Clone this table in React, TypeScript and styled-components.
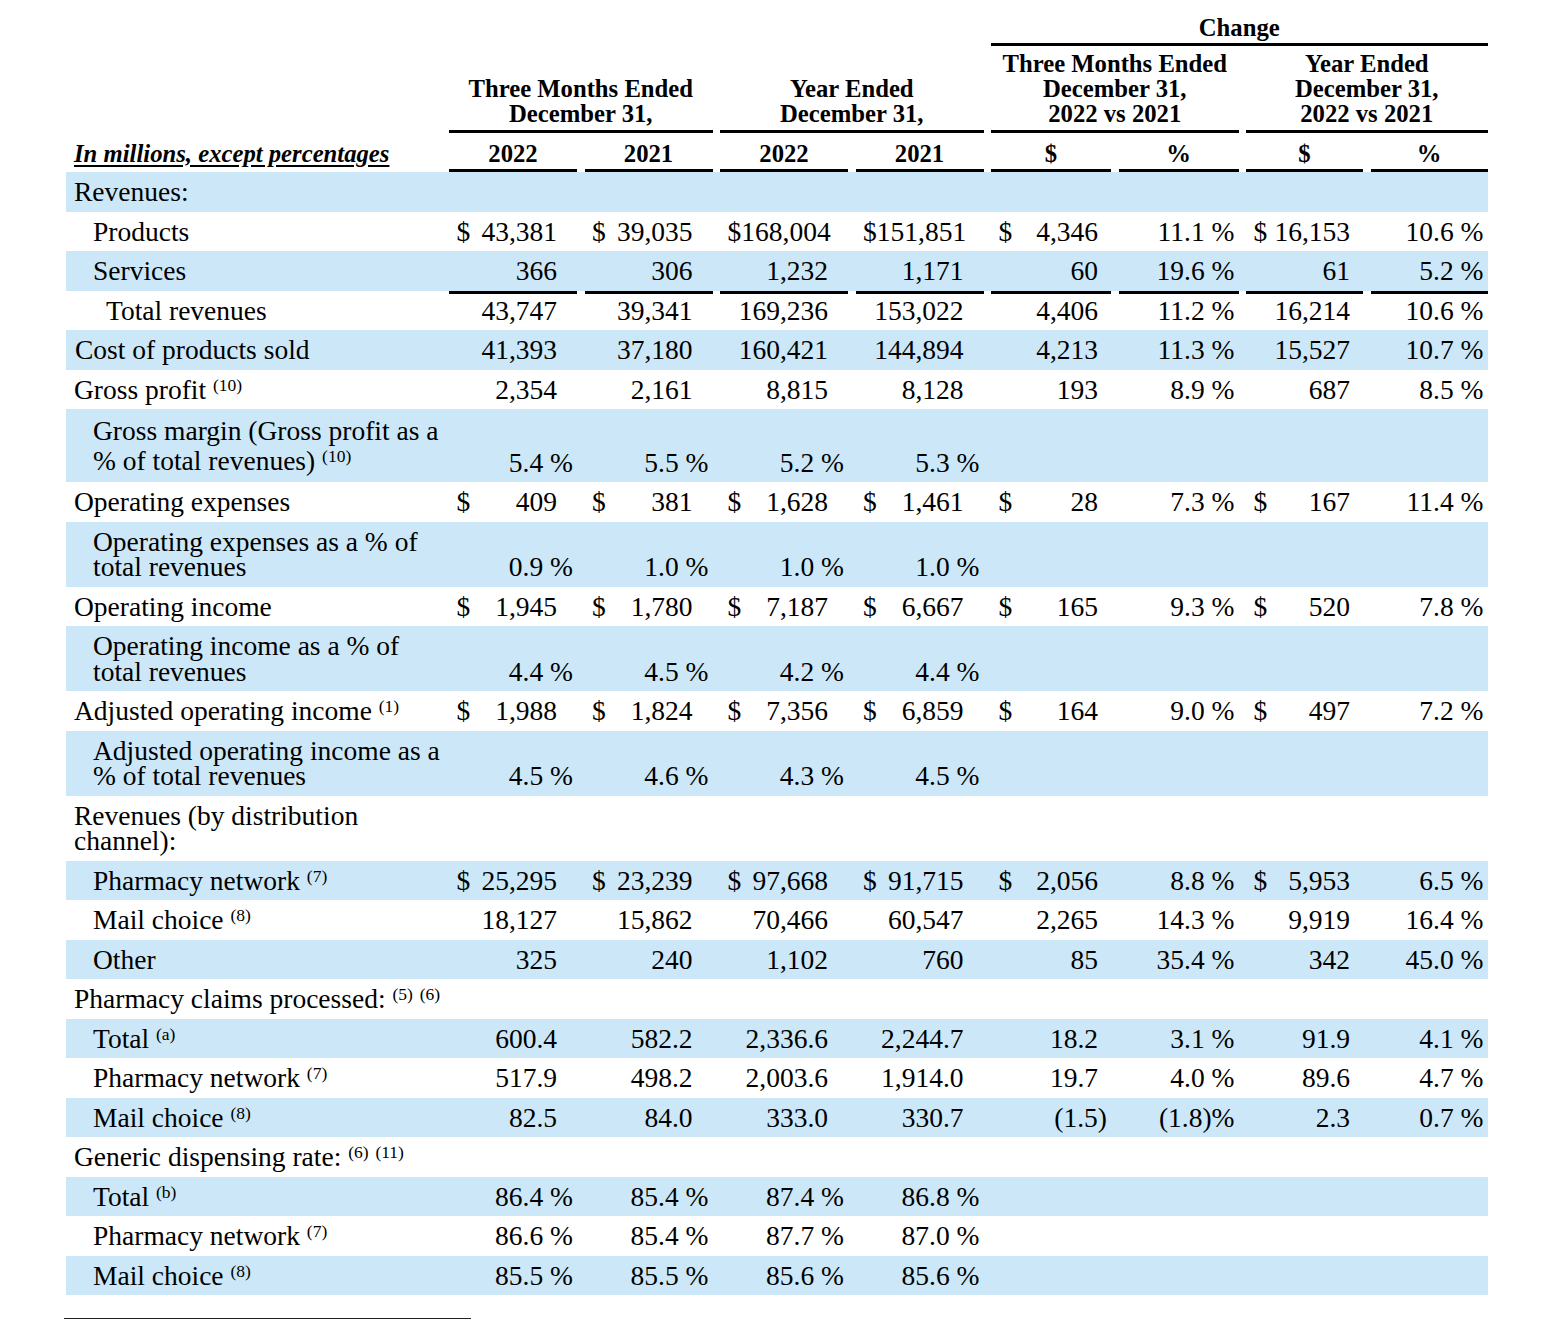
import { FC, ReactNode } from 'react';
import styled, { createGlobalStyle } from 'styled-components';

const GlobalStyle = createGlobalStyle`
  body {
    margin: 0;
    background: #fff;
    color: #000;
    font-family: 'Liberation Serif', 'Times New Roman', serif;
  }
`;

const COLUMNS = '375.5px repeat(4, 128px) 120px 120px 117px 117px';
const SHADE = '#cce8f8';

const Page = styled.div`
  padding: 0 0 40px 66px;
  width: 1422px;
`;

const Header = styled.div`
  display: grid;
  grid-template-columns: ${COLUMNS};
  column-gap: 7.5px;
  font-size: 24.7px;
  font-weight: bold;
  line-height: 25px;
`;

const GroupHead = styled.div<{ $col: string; $row: string; $pad?: string }>`
  grid-column: ${(p) => p.$col};
  grid-row: ${(p) => p.$row};
  align-self: end;
  text-align: center;
  padding: ${(p) => p.$pad || '0 0 4.5px'};
  border-bottom: 3px solid #000;
`;

const ColHead = styled.div`
  grid-row: 3;
  text-align: center;
  padding: 7.5px 0 3.5px;
  border-bottom: 3px solid #000;
`;

const UnitsHead = styled.div`
  grid-row: 3;
  grid-column: 1;
  padding: 7.5px 0 3.5px 8px;
  font-style: italic;
  text-decoration: underline;
  text-underline-offset: 3px;
  white-space: nowrap;
`;

const Row = styled.div<{ $shade?: boolean }>`
  display: grid;
  grid-template-columns: ${COLUMNS};
  column-gap: 7.5px;
  background: ${(p) => (p.$shade ? SHADE : 'transparent')};
  font-size: 27.5px;
  line-height: 25.5px;
`;

const Label = styled.div<{ $indent: number; $tall?: boolean }>`
  padding: 7px 0 7px ${(p) => p.$indent}px;
  white-space: nowrap;
  line-height: ${(p) => (p.$tall ? '29.5px' : '25.5px')};
`;

const Cell = styled.div<{ $rule?: boolean }>`
  display: flex;
  align-items: flex-end;
  padding: ${(p) => (p.$rule ? '4px' : '7px')} 0 7px 7.5px;
  border-top: ${(p) => (p.$rule ? '3px solid #000' : 'none')};
  white-space: nowrap;
`;

const Value = styled.span<{ $pad: number }>`
  margin-left: auto;
  padding-right: ${(p) => p.$pad}px;
`;

const Sup = styled.sup`
  font-size: 17.5px;
  line-height: 0;
  vertical-align: 8px;
`;

const FootRule = styled.div`
  width: 407px;
  margin: 23px 0 0 -2px;
  border-top: 1px solid #222;
`;

// number padding for cols 1-4 and the two $ change columns
const NUM_PAD = [20, 20, 20, 20, 13, 4, 13, 4];

type Line = {
  label: ReactNode;
  indent: number;
  shade?: boolean;
  rule?: boolean;
  tall?: boolean;
  values?: string[];
};

const s = (n: string) => <Sup>{n}</Sup>;

const lines: Line[] = [
  { label: 'Revenues:', indent: 8, shade: true },
  { label: 'Products', indent: 27, values: ['$43,381', '$39,035', '$168,004', '$151,851', '$4,346', '11.1 %', '$16,153', '10.6 %'] },
  { label: 'Services', indent: 27, shade: true, values: ['366', '306', '1,232', '1,171', '60', '19.6 %', '61', '5.2 %'] },
  { label: 'Total revenues', indent: 40, rule: true, values: ['43,747', '39,341', '169,236', '153,022', '4,406', '11.2 %', '16,214', '10.6 %'] },
  { label: 'Cost of products sold', indent: 9, shade: true, values: ['41,393', '37,180', '160,421', '144,894', '4,213', '11.3 %', '15,527', '10.7 %'] },
  { label: <>Gross profit {s('(10)')}</>, indent: 8, values: ['2,354', '2,161', '8,815', '8,128', '193', '8.9 %', '687', '8.5 %'] },
  {
    label: <>Gross margin (Gross profit as a<br />% of total revenues) {s('(10)')}</>,
    indent: 27, shade: true, tall: true, values: ['5.4 %', '5.5 %', '5.2 %', '5.3 %'],
  },
  { label: 'Operating expenses', indent: 8, values: ['$409', '$381', '$1,628', '$1,461', '$28', '7.3 %', '$167', '11.4 %'] },
  { label: <>Operating expenses as a % of<br />total revenues</>, indent: 27, shade: true, values: ['0.9 %', '1.0 %', '1.0 %', '1.0 %'] },
  { label: 'Operating income', indent: 8, values: ['$1,945', '$1,780', '$7,187', '$6,667', '$165', '9.3 %', '$520', '7.8 %'] },
  { label: <>Operating income as a % of<br />total revenues</>, indent: 27, shade: true, values: ['4.4 %', '4.5 %', '4.2 %', '4.4 %'] },
  { label: <>Adjusted operating income {s('(1)')}</>, indent: 8, values: ['$1,988', '$1,824', '$7,356', '$6,859', '$164', '9.0 %', '$497', '7.2 %'] },
  { label: <>Adjusted operating income as a<br />% of total revenues</>, indent: 27, shade: true, values: ['4.5 %', '4.6 %', '4.3 %', '4.5 %'] },
  { label: <>Revenues (by distribution<br />channel):</>, indent: 8 },
  { label: <>Pharmacy network {s('(7)')}</>, indent: 27, shade: true, values: ['$25,295', '$23,239', '$97,668', '$91,715', '$2,056', '8.8 %', '$5,953', '6.5 %'] },
  { label: <>Mail choice {s('(8)')}</>, indent: 27, values: ['18,127', '15,862', '70,466', '60,547', '2,265', '14.3 %', '9,919', '16.4 %'] },
  { label: 'Other', indent: 27, shade: true, values: ['325', '240', '1,102', '760', '85', '35.4 %', '342', '45.0 %'] },
  { label: <>Pharmacy claims processed: {s('(5)')} {s('(6)')}</>, indent: 8 },
  { label: <>Total {s('(a)')}</>, indent: 27, shade: true, values: ['600.4', '582.2', '2,336.6', '2,244.7', '18.2', '3.1 %', '91.9', '4.1 %'] },
  { label: <>Pharmacy network {s('(7)')}</>, indent: 27, values: ['517.9', '498.2', '2,003.6', '1,914.0', '19.7', '4.0 %', '89.6', '4.7 %'] },
  { label: <>Mail choice {s('(8)')}</>, indent: 27, shade: true, values: ['82.5', '84.0', '333.0', '330.7', '(1.5)', '(1.8)%', '2.3', '0.7 %'] },
  { label: <>Generic dispensing rate: {s('(6)')} {s('(11)')}</>, indent: 8 },
  { label: <>Total {s('(b)')}</>, indent: 27, shade: true, values: ['86.4 %', '85.4 %', '87.4 %', '86.8 %'] },
  { label: <>Pharmacy network {s('(7)')}</>, indent: 27, values: ['86.6 %', '85.4 %', '87.7 %', '87.0 %'] },
  { label: <>Mail choice {s('(8)')}</>, indent: 27, shade: true, values: ['85.5 %', '85.5 %', '85.6 %', '85.6 %'] },
];

const DataCell: FC<{ raw?: string; col: number; rule?: boolean }> = ({ raw, col, rule }) => {
  if (!raw) return <Cell $rule={rule} />;
  const dollar = raw.startsWith('$');
  const text = dollar ? raw.slice(1) : raw;
  let pad = NUM_PAD[col];
  if (text.endsWith('%')) pad = 4;
  else if (text.endsWith(')')) pad -= 9;
  return (
    <Cell $rule={rule}>
      {dollar && <span>$</span>}
      <Value $pad={pad}>{text}</Value>
    </Cell>
  );
};

const TableHeader: FC = () => (
  <Header>
    <GroupHead $col="6 / 10" $row="1" $pad="14.5px 0 3.5px">Change</GroupHead>
    <GroupHead $col="2 / 4" $row="1 / 3">Three Months Ended<br />December 31,</GroupHead>
    <GroupHead $col="4 / 6" $row="1 / 3">Year Ended<br />December 31,</GroupHead>
    <GroupHead $col="6 / 8" $row="2" $pad="4.5px 0 4.5px">Three Months Ended<br />December 31,<br />2022 vs 2021</GroupHead>
    <GroupHead $col="8 / 10" $row="2" $pad="4.5px 0 4.5px">Year Ended<br />December 31,<br />2022 vs 2021</GroupHead>
    <UnitsHead>In millions, except percentages</UnitsHead>
    {['2022', '2021', '2022', '2021', '$', '%', '$', '%'].map((h, i) => (
      <ColHead key={i}>{h}</ColHead>
    ))}
  </Header>
);

const App: FC = () => (
  <>
    <GlobalStyle />
    <Page>
      <TableHeader />
      {lines.map((line, i) => (
        <Row key={i} $shade={line.shade}>
          <Label $indent={line.indent} $tall={line.tall}>{line.label}</Label>
          {Array.from({ length: 8 }).map((_, c) => (
            <DataCell key={c} col={c} raw={line.values?.[c]} rule={line.rule} />
          ))}
        </Row>
      ))}
      <FootRule />
    </Page>
  </>
);

export default App;
